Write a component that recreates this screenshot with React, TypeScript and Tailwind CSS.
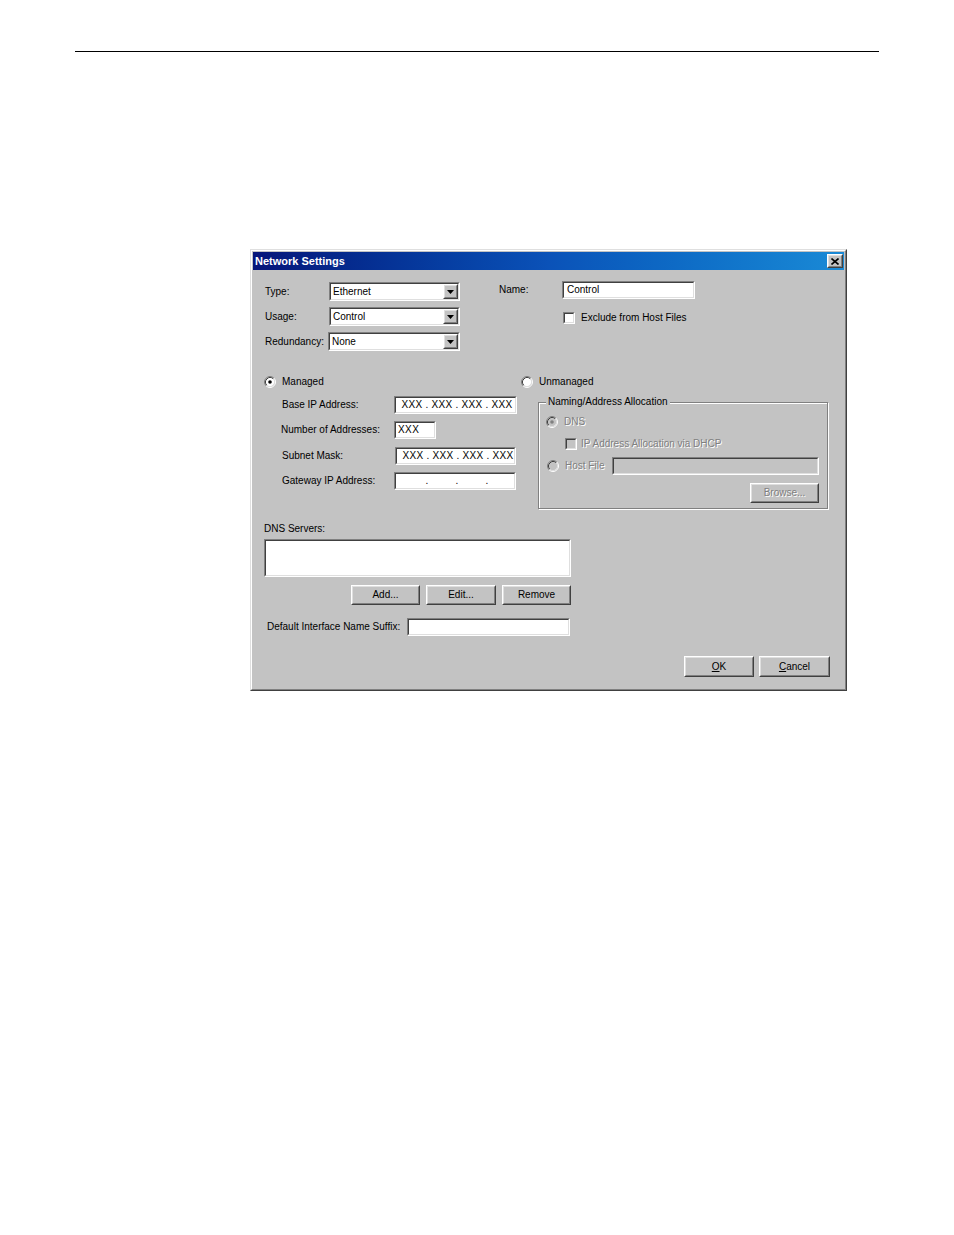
import React from "react";

// classic win32 bevels
function Sunken({
  className = "",
  inner = "bg-white",
  children,
}: {
  className?: string;
  inner?: string;
  children?: React.ReactNode;
}) {
  return (
    <div
      className={`border border-t-[#808080] border-l-[#808080] border-b-white border-r-white ${className}`}
    >
      <div
        className={`h-full w-full border border-t-[#404040] border-l-[#404040] border-b-[#dfdfdf] border-r-[#dfdfdf] ${inner}`}
      >
        {children}
      </div>
    </div>
  );
}

function Raised({
  className = "",
  children,
}: {
  className?: string;
  children?: React.ReactNode;
}) {
  return (
    <div
      className={`border border-t-white border-l-white border-b-[#404040] border-r-[#404040] bg-[#c3c3c3] ${className}`}
    >
      <div className="flex h-full w-full items-center justify-center border border-t-[#dfdfdf] border-l-[#dfdfdf] border-b-[#808080] border-r-[#808080]">
        {children}
      </div>
    </div>
  );
}

function Radio({ checked = false, disabled = false }) {
  return (
    <svg width="12" height="12" viewBox="0 0 12 12" className="shrink-0">
      <circle cx="6" cy="6" r="4.5" fill={disabled ? "#c3c3c3" : "#fff"} />
      <path d="M2.11 9.89A5.5 5.5 0 0 1 9.89 2.11" fill="none" stroke="#808080" />
      <path d="M9.89 2.11A5.5 5.5 0 0 1 2.11 9.89" fill="none" stroke="#fff" />
      <path d="M2.82 9.18A4.5 4.5 0 0 1 9.18 2.82" fill="none" stroke="#404040" />
      <path d="M9.18 2.82A4.5 4.5 0 0 1 2.82 9.18" fill="none" stroke="#dfdfdf" />
      {checked && <circle cx="6" cy="6" r="1.8" fill={disabled ? "#808080" : "#000"} />}
    </svg>
  );
}

function Check({ disabled = false }) {
  return (
    <Sunken
      className="h-[12px] w-[12px] shrink-0"
      inner={disabled ? "bg-[#c3c3c3]" : "bg-white"}
    />
  );
}

function Combo({ value, className = "" }: { value: string; className?: string }) {
  return (
    <Sunken className={`h-[19px] ${className}`}>
      <div className="flex h-full items-center">
        <span className="flex-1 pl-[2px]">{value}</span>
        <Raised className="h-full w-[15px]">
          <svg width="7" height="4" viewBox="0 0 7 4">
            <polygon points="0,0 7,0 3.5,4" fill="#000" />
          </svg>
        </Raised>
      </div>
    </Sunken>
  );
}

function IpField({ filled, className = "" }: { filled: boolean; className?: string }) {
  const seg = filled ? "XXX" : "";
  return (
    <Sunken className={`h-[18px] ${className}`}>
      <div className="grid h-full grid-cols-[22px_8px_22px_8px_22px_8px_22px] items-center pl-[5px] text-center tracking-[0.4px]">
        <span>{seg}</span>
        <span>.</span>
        <span>{seg}</span>
        <span>.</span>
        <span>{seg}</span>
        <span>.</span>
        <span>{seg}</span>
      </div>
    </Sunken>
  );
}

const dim = "text-[#808080] [text-shadow:1px_1px_0_#fff]";

export default function App() {
  return (
    <div className="h-[1235px] w-[954px] overflow-hidden bg-white font-['Liberation_Sans',Arial,sans-serif] text-[10px] leading-[12px] text-black">
      {/* page rule */}
      <div className="ml-[75px] mt-[51px] h-px w-[804px] bg-black" />

      {/* dialog */}
      <div className="ml-[250px] mt-[197px] h-[442px] w-[597px] border border-t-[#dfdfdf] border-l-[#dfdfdf] border-b-[#404040] border-r-[#404040] bg-[#c3c3c3]">
        <div className="h-full w-full border border-t-white border-l-white border-b-[#808080] border-r-[#808080] p-px">
          {/* title bar */}
          <div className="flex h-[18px] items-center justify-between bg-gradient-to-r from-[#06157a] via-[#0b52b8] to-[#1a8ad6] pl-[2px] pr-[1px]">
            <span className="text-[11px] font-bold text-white">Network Settings</span>
            <Raised className="h-[14px] w-[16px]">
              <svg width="8" height="7" viewBox="0 0 8 7">
                <path d="M0.5 0.5L7.5 6.5M7.5 0.5L0.5 6.5" stroke="#000" strokeWidth="1.6" />
              </svg>
            </Raised>
          </div>

          {/* body */}
          <div className="flex h-[418px] flex-col">
            {/* type / usage / redundancy + name */}
            <div className="mt-[11px] flex items-start">
              <div className="ml-[12px] flex flex-col gap-[6px] pt-px">
                <div className="flex h-[19px] items-center">
                  <span className="w-[64px]">Type:</span>
                  <Combo value="Ethernet" className="w-[131px]" />
                </div>
                <div className="flex h-[19px] items-center">
                  <span className="w-[64px]">Usage:</span>
                  <Combo value="Control" className="w-[131px]" />
                </div>
                <div className="flex h-[19px] items-center">
                  <span className="w-[63px]">Redundancy:</span>
                  <Combo value="None" className="w-[132px]" />
                </div>
              </div>
              <div className="ml-[39px] flex flex-col">
                <div className="flex h-[18px] items-center">
                  <span className="w-[63px]">Name:</span>
                  <Sunken className="h-[18px] w-[133px]">
                    <div className="flex h-full items-center pl-[3px]">Control</div>
                  </Sunken>
                </div>
                <div className="ml-[64px] mt-[13px] flex items-center gap-[6px]">
                  <Check />
                  <span>Exclude from Host Files</span>
                </div>
              </div>
            </div>

            {/* managed / unmanaged */}
            <div className="mt-[24px] flex items-start">
              <div className="ml-[11px] flex w-[257px] flex-col">
                <div className="flex h-[13px] items-center gap-[6px]">
                  <Radio checked />
                  <span>Managed</span>
                </div>
                <div className="mt-[8px] flex h-[18px] items-center">
                  <span className="ml-[18px] w-[112px]">Base IP Address:</span>
                  <IpField filled className="w-[123px]" />
                </div>
                <div className="mt-[7px] flex h-[18px] items-center">
                  <span className="ml-[17px] w-[113px]">Number of Addresses:</span>
                  <Sunken className="h-[18px] w-[42px]">
                    <div className="flex h-full items-center pl-[2px] tracking-[0.4px]">XXX</div>
                  </Sunken>
                </div>
                <div className="mt-[8px] flex h-[18px] items-center">
                  <span className="ml-[18px] w-[113px]">Subnet Mask:</span>
                  <IpField filled className="w-[121px]" />
                </div>
                <div className="mt-[7px] flex h-[18px] items-center">
                  <span className="ml-[18px] w-[112px]">Gateway IP Address:</span>
                  <IpField filled={false} className="w-[122px]" />
                </div>
              </div>

              <div className="flex flex-col">
                <div className="flex h-[13px] items-center gap-[6px]">
                  <Radio />
                  <span>Unmanaged</span>
                </div>
                <div className="relative ml-[17px] mt-[14px] h-[107px] w-[290px] border border-[#808080] shadow-[inset_1px_1px_0_#fff,1px_1px_0_#fff]">
                  <span className="absolute -top-[7px] left-[7px] bg-[#c3c3c3] px-[2px]">
                    Naming/Address Allocation
                  </span>
                  <div className="flex flex-col pl-[7px] pt-[12px]">
                    <div className="flex h-[13px] items-center gap-[6px]">
                      <Radio checked disabled />
                      <span className={dim}>DNS</span>
                    </div>
                    <div className="ml-[19px] mt-[10px] flex items-center gap-[4px]">
                      <Check disabled />
                      <span className={dim}>IP Address Allocation via DHCP</span>
                    </div>
                    <div className="mt-[7px] flex h-[18px] items-center">
                      <span className="ml-px flex items-center gap-[6px]">
                        <Radio disabled />
                        <span className={`w-[47px] ${dim}`}>Host File</span>
                      </span>
                      <Sunken className="h-[18px] w-[207px]" inner="bg-[#c3c3c3]" />
                    </div>
                    <div className="mt-[8px] flex justify-end pr-[8px]">
                      <Raised className="h-[20px] w-[69px]">
                        <span className={dim}>Browse...</span>
                      </Raised>
                    </div>
                  </div>
                </div>
              </div>
            </div>

            {/* dns servers */}
            <span className="ml-[11px] mt-[14px]">DNS Servers:</span>
            <Sunken className="ml-[11px] mt-[4px] h-[38px] w-[307px]" />
            <div className="ml-[98px] mt-[8px] flex gap-[6px]">
              <Raised className="h-[20px] w-[69px]">Add...</Raised>
              <Raised className="h-[20px] w-[70px]">Edit...</Raised>
              <Raised className="h-[20px] w-[69px]">Remove</Raised>
            </div>
            <div className="ml-[14px] mt-[13px] flex h-[18px] items-center">
              <span className="w-[140px]">Default Interface Name Suffix:</span>
              <Sunken className="h-[18px] w-[163px]" />
            </div>

            {/* ok / cancel */}
            <div className="mt-[20px] flex justify-end gap-[5px] pr-[14px]">
              <Raised className="h-[21px] w-[70px]">
                <span>
                  <span className="underline">O</span>K
                </span>
              </Raised>
              <Raised className="h-[21px] w-[71px]">
                <span>
                  <span className="underline">C</span>ancel
                </span>
              </Raised>
            </div>
          </div>
        </div>
      </div>
    </div>
  );
}
